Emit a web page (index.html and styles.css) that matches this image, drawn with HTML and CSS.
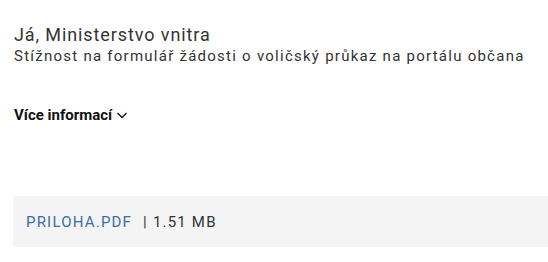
FILE: index.html
```html
<!DOCTYPE html>
<html lang="cs">
<head>
<meta charset="utf-8">
<link rel="stylesheet" href="styles.css">
</head>
<body>
<div class="page">
  <div class="head">
    <div class="title">Já, Ministerstvo vnitra</div>
    <div class="subtitle">Stížnost na formulář žádosti o voličský průkaz na portálu občana</div>
  </div>
  <button class="more">Více informací
    <svg width="12" height="12" viewBox="0 0 12 12"><path d="M1.5 4 L6 8.5 L10.5 4" fill="none" stroke="#111" stroke-width="1.4"/></svg>
  </button>
  <div class="attach">
    <a class="file" href="#">PRILOHA.PDF</a>
    <span class="size">| 1.51 MB</span>
  </div>
</div>
</body>
</html>
```

FILE: styles.css
```css
html, body { margin: 0; padding: 0; background: #fff; }
body { font-family: Roboto, "Liberation Sans", sans-serif; }
.page { padding: 23px 0 0 13px; }
.head { padding-left: 1px; }
.title { font-size: 18px; line-height: 23px; color: #333; letter-spacing: 0.9px; }
.subtitle { font-size: 15px; line-height: 20px; color: #333; letter-spacing: 1.25px; }
.more {
  display: flex; align-items: center; gap: 4px;
  margin-top: 40px; padding: 0 0 0 1px;
  background: none; border: 0;
  font-family: Roboto, "Liberation Sans", sans-serif;
  font-weight: 700; font-size: 15px; color: #111;
}
.attach {
  margin-top: 72px; height: 51px;
  background: #f4f4f4;
  display: flex; align-items: center;
  padding-left: 13px;
  font-size: 15px; letter-spacing: 1.2px;
}
.file { color: #3a6ea5; text-decoration: none; }
.size { color: #333; margin-left: 11px; letter-spacing: 1.2px; }
```
